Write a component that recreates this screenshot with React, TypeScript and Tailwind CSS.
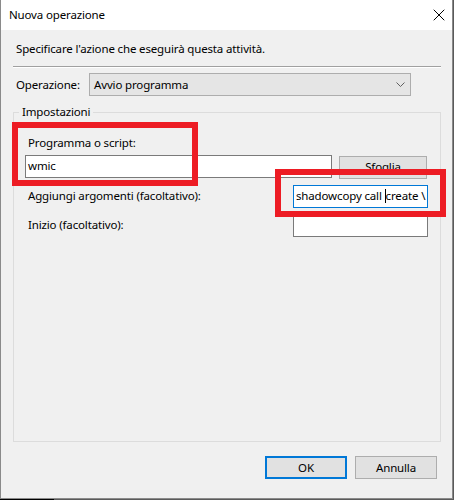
import { X } from 'lucide-react'

const font = { fontFamily: '"Noto Sans", "Segoe UI", sans-serif', letterSpacing: '-0.15px' }

const Chevron = () => (
	<svg width="9" height="5" viewBox="0 0 9 5" className="text-[#606060]">
		<path d="M0.5 0.5 L4.5 4.5 L8.5 0.5" fill="none" stroke="currentColor" strokeWidth="1" />
	</svg>
)

const WinButton = ({ label, focused = false, wide = false }: { label: string; focused?: boolean; wide?: boolean }) => (
	<button
		className={
			(wide ? 'w-[88px] ' : 'w-[82px] ') +
			(focused
				? 'h-[23px] bg-[#e1e1e1] border-2 border-[#0078d7] text-black flex items-center justify-center'
				: 'h-[23px] bg-[#e1e1e1] border border-[#adadad] text-black flex items-center justify-center')
		}
	>
		{label}
	</button>
)

const App = () => {
	return (
		<div className="relative w-[454px] h-[500px] bg-[#5a5a5a] overflow-hidden" style={font}>
			<div className="w-[453px] h-[499px] bg-[#f0f0f0] border-l border-r border-b border-[#8a8a8a] flex flex-col text-[11.5px] text-black leading-none">
				{/* title bar */}
				<div className="h-[30px] bg-white flex items-center justify-between pl-[8px] pr-[3px] shrink-0">
					<span>Nuova operazione</span>
					<X size={20} strokeWidth={1.2} className="text-black" />
				</div>

				<div className="flex-1 flex flex-col pl-[12px] pr-[11px]">
					<p className="mt-[13px] pl-[3px] h-[14px]">Specificare l'azione che eseguirà questa attività.</p>

					<div className="mt-[9px] h-[2px] border-t border-[#a0a0a0] border-b border-b-white" />

					<div className="mt-[5px] flex items-center pl-[3px] pr-[30px]">
						<span className="w-[73px]">Operazione:</span>
						<div className="flex-1 h-[23px] bg-[#e5e5e5] border border-[#adadad] flex items-center justify-between pl-[4px] pr-[5px]">
							<span>Avvio programma</span>
							<Chevron />
						</div>
					</div>

					<fieldset className="mt-[8px] h-[338px] border border-[#dcdcdc] p-0">
						<legend className="ml-[5px] px-[3px] leading-[16px]">Impostazioni</legend>

						<div className="pl-[11px] pr-[12px]">
							<p className="mt-[17px] pl-[3px]">Programma o script:</p>
							<div className="mt-[6px] flex items-start">
								<div className="w-[307px] h-[23px] bg-white border border-[#7a7a7a] flex items-center pl-[2px]">wmic</div>
								<div className="ml-[7px] mt-[1px]">
									<WinButton label="Sfoglia" wide />
								</div>
							</div>

							<div className="mt-[6px] flex items-center justify-between pl-[3px]">
								<span>Aggiungi argomenti (facoltativo):</span>
								<div className="w-[135px] h-[23px] bg-white border border-[#0078d7] flex items-center pl-[2px] overflow-hidden whitespace-pre">
									{'shadowcopy call '}
									<span className="inline-block w-px h-[14px] bg-black" />
									{'create \\'}
								</div>
							</div>

							<div className="mt-[6px] flex items-center justify-between pl-[3px]">
								<span>Inizio (facoltativo):</span>
								<div className="w-[135px] h-[23px] bg-white border border-[#7a7a7a]" />
							</div>
						</div>
					</fieldset>

					<div className="mt-[14px] flex justify-end gap-[8px] pr-[4px]">
						<WinButton label="OK" focused />
						<WinButton label="Annulla" />
					</div>
				</div>
			</div>
			<div className="absolute left-0 bottom-0 w-[54px] h-px bg-black" />

			{/* red annotation boxes */}
			<div className="absolute left-[12px] top-[122px] w-[186px] h-[64px] border-[6px] border-[#ed1c24]" />
			<div className="absolute left-[275px] top-[169px] w-[171px] h-[48px] border-[6px] border-[#ed1c24]" />
		</div>
	)
}

export default App
